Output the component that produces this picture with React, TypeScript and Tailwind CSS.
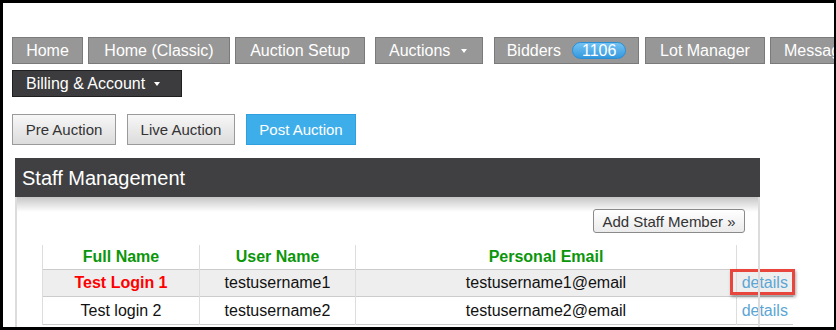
import React from "react";

const navBtn =
  "h-[27px] flex items-center justify-center border border-[#7a7a7a] bg-[#979797] text-white text-[16px] leading-none whitespace-nowrap";

const subTab =
  "h-[31px] flex items-center justify-center border text-[15px] leading-none";

const Caret = () => (
  <span className="inline-block w-0 h-0 border-l-[3px] border-r-[3px] border-t-[4px] border-l-transparent border-r-transparent border-t-white" />
);

const rows = [
  { name: "Test Login 1", user: "testusername1", email: "testusername1@email", active: true },
  { name: "Test login 2", user: "testusername2", email: "testusername2@email", active: false },
];

export default function App() {
  return (
    <div className="w-[836px] h-[330px] overflow-hidden bg-white border-black border-t-[3px] border-l-[3px] border-b-[3px] border-r-2 font-['Liberation_Sans',Arial,sans-serif]">
      <div className="pl-[9px] pt-[34px]">
        {/* main nav */}
        <nav className="w-[900px] flex flex-wrap gap-y-[6px]">
          <a className={`${navBtn} w-[71px] mr-[5px]`}>Home</a>
          <a className={`${navBtn} w-[142px] mr-[5px]`}>Home (Classic)</a>
          <a className={`${navBtn} w-[130px] mr-[10px]`}>Auction Setup</a>
          <a className={`${navBtn} w-[108px] mr-[11px] !justify-start pl-[13px] gap-[11px]`}>
            Auctions <Caret />
          </a>
          <a className={`${navBtn} w-[145px] mr-[6px] gap-[11px]`}>
            Bidders
            <span className="h-[17px] px-[9px] flex items-center rounded-full border border-[#2b8fd6] bg-gradient-to-b from-[#72c2f3] to-[#3399dd] text-[16px] text-white">
              1106
            </span>
          </a>
          <a className={`${navBtn} w-[120px] mr-[5px]`}>Lot Manager</a>
          <a className={`${navBtn} w-[110px] !justify-start pl-[13px]`}>Messages</a>
          <a className={`${navBtn} w-[170px] !justify-start pl-[13px] gap-[9px] !bg-[#3c3c3e] !border-[#1f1f1f]`}>
            Billing &amp; Account <Caret />
          </a>
        </nav>

        {/* auction phase tabs */}
        <div className="mt-[17px] flex gap-[11px]">
          <button className={`${subTab} w-[104px] border-[#9a9a9a] bg-gradient-to-b from-[#f7f7f7] to-[#dcdcdc] text-[#333]`}>
            Pre Auction
          </button>
          <button className={`${subTab} w-[108px] border-[#9a9a9a] bg-gradient-to-b from-[#f7f7f7] to-[#dcdcdc] text-[#333]`}>
            Live Auction
          </button>
          <button className={`${subTab} w-[110px] border-[#2f9fe0] bg-[#3eaeea] text-white`}>
            Post Auction
          </button>
        </div>

        {/* staff panel */}
        <div className="mt-[13px] ml-[3px] w-[745px]">
          <div className="h-[39px] bg-[#404042] flex items-center pl-[7px] text-white text-[20px]">
            Staff Management
          </div>
          <div className="relative border-l-2 border-[#dcdcdc] bg-[linear-gradient(to_bottom,#c6c6c6,#ffffff_15px)] pt-[12px] h-[140px]">
            <div className="absolute right-0 top-0 bottom-0 w-[2px] bg-[#dcdcdc] z-10" />
            <div className="flex justify-end pr-[15px]">
              <button className="w-[152px] h-[24px] rounded-[3px] border border-[#8a8a8a] bg-gradient-to-b from-white to-[#ebebeb] text-[#333] text-[15px] leading-none">
                Add Staff Member »
              </button>
            </div>

            <table className="mt-[12px] ml-[25px] w-[750px] border-collapse table-fixed text-[16px]">
              <colgroup>
                <col className="w-[157px]" />
                <col className="w-[156px]" />
                <col className="w-[381px]" />
                <col className="w-[56px]" />
              </colgroup>
              <thead>
                <tr className="h-[24px] border-b border-[#cccccc]">
                  <th className="border-l border-[#dddddd] text-[#0a960a] font-bold">Full Name</th>
                  <th className="border-l border-[#dddddd] text-[#0a960a] font-bold">User Name</th>
                  <th className="border-l border-[#dddddd] text-[#0a960a] font-bold">Personal Email</th>
                  <th className="border-l border-[#dddddd]"></th>
                </tr>
              </thead>
              <tbody>
                {rows.map((r) => (
                  <tr
                    key={r.user}
                    className={`border-b border-[#cccccc] ${r.active ? "h-[27px] bg-[#eeeeee]" : "h-[28px] bg-white"}`}
                  >
                    <td
                      className={`border-l border-[#dddddd] text-center ${r.active ? "text-[#ff0000] font-bold" : "text-[#111]"}`}
                    >
                      {r.name}
                    </td>
                    <td className="border-l border-[#dddddd] text-center text-[#111]">{r.user}</td>
                    <td className="border-l border-[#dddddd] text-center text-[#111]">{r.email}</td>
                    <td className="relative border-l border-[#dddddd] text-center text-[#5ba6d4]">
                      details
                      {r.active && (
                        <span className="absolute left-[-7px] top-[-1px] w-[65px] h-[26px] border-[3px] border-[#e8453c] shadow-[1px_2px_3px_rgba(0,0,0,0.35)]" />
                      )}
                    </td>
                  </tr>
                ))}
              </tbody>
            </table>
          </div>
        </div>
      </div>
    </div>
  );
}
